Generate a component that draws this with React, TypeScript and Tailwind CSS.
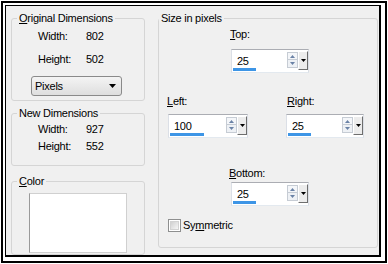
import React from 'react';

function Key({ children }: { children: React.ReactNode }) {
  return <u className="underline-offset-[1px]">{children}</u>;
}

function SpinBox({ value, bar, className }: { value: string; bar: number; className: string }) {
  return (
    <div className={`h-[24px] border border-[#abadb3] border-x-[#dbdfe6] border-b-[#e3e9ef] bg-white ${className}`}>
      <div className="relative flex h-full">
        <span className="flex-1 self-center pl-[5px]">{value}</span>
        {/* up / down arrows */}
        <div className="mt-[2px] flex h-[16px] w-[11px] flex-col">
          <div className="flex h-[8px] items-center justify-center border border-[#c6ccd4] bg-[#f4f6f9]">
            <svg width="5" height="3" viewBox="0 0 5 3">
              <path d="M2.5 0L5 3H0z" fill="#6a82a6" />
            </svg>
          </div>
          <div className="flex h-[8px] items-center justify-center border border-t-0 border-[#c6ccd4] bg-[#eef1f5]">
            <svg width="5" height="3" viewBox="0 0 5 3">
              <path d="M0 0h5L2.5 3z" fill="#6a82a6" />
            </svg>
          </div>
        </div>
        {/* small drop button */}
        <div className="mt-[1px] flex h-[19px] w-[10px] items-center justify-center border border-white border-r-[#6e6e6e] border-b-[#6e6e6e] bg-[#ececec]">
          <svg width="5" height="3" viewBox="0 0 5 3">
            <path d="M0 0h5L2.5 3z" fill="#000" />
          </svg>
        </div>
        <div className="absolute bottom-[1px] left-[1px] h-[3px] bg-[#3d95e6]" style={{ width: bar }} />
      </div>
    </div>
  );
}

export default function App() {
  return (
    <div className="h-[264px] w-[388px] bg-white p-[1px] font-['Liberation_Sans',Arial,sans-serif] text-[11px] leading-[13px] tracking-[-0.25px] text-black">
      <div className="h-full w-full border-2 border-black bg-white pt-[2px] pr-[4px] pb-[4px] pl-[2px]">
        <div className="flex h-full w-full items-start overflow-hidden border border-r-2 border-b-2 border-black bg-[#f0f0f0]">
          {/* left column */}
          <div className="mt-[6px] ml-[5px] flex w-[134px] flex-col">
            <fieldset className="h-[89px] rounded-[3px] border border-[#d5d5d5]">
              <legend className="ml-[5px] px-[2px]">
                <Key>O</Key>riginal Dimensions
              </legend>
              <div className="mt-[5px] flex pl-[26px]">
                <span className="w-[48px]">Width:</span>
                <span>802</span>
              </div>
              <div className="mt-[10px] flex pl-[26px]">
                <span className="w-[48px]">Height:</span>
                <span>502</span>
              </div>
              <div className="mt-[10px] ml-[19px] flex h-[20px] w-[91px] items-center justify-between rounded-[3px] border border-[#8a8a8a] bg-gradient-to-b from-[#f4f4f4] to-[#dedede] pr-[5px] pl-[3px]">
                <span>Pixels</span>
                <svg width="7" height="4" viewBox="0 0 7 4">
                  <path d="M0 0h7L3.5 4z" fill="#000" />
                </svg>
              </div>
            </fieldset>

            <fieldset className="mt-[6px] h-[59px] rounded-[3px] border border-[#d5d5d5]">
              <legend className="ml-[5px] px-[2px]">New Dimensions</legend>
              <div className="mt-[3px] flex pl-[26px]">
                <span className="w-[48px]">Width:</span>
                <span>927</span>
              </div>
              <div className="mt-[4px] flex pl-[26px]">
                <span className="w-[48px]">Height:</span>
                <span>552</span>
              </div>
            </fieldset>

            <fieldset className="mt-[9px] h-[80px] rounded-[3px] border border-[#d5d5d5]">
              <legend className="ml-[5px] px-[2px]">
                <Key>C</Key>olor
              </legend>
              <div className="mt-[5px] ml-[17px] h-[60px] w-[98px] border border-[#d0d0d0] border-l-[#9a9a9a] bg-white" />
            </fieldset>
          </div>

          {/* right column */}
          <fieldset className="mt-[6px] ml-[13px] h-[236px] w-[220px] rounded-[3px] border border-[#d5d5d5]">
            <legend className="px-[2px]">Size in pixels</legend>

            <div className="mt-[3px] ml-[71px]">
              <Key>T</Key>op:
            </div>
            <SpinBox value="25" bar={23} className="mt-[8px] ml-[72px] w-[78px]" />

            <div className="mt-[22px] ml-[8px] flex">
              <span className="w-[120px]">
                <Key>L</Key>eft:
              </span>
              <span>
                <Key>R</Key>ight:
              </span>
            </div>
            <div className="mt-[6px] ml-[9px] flex">
              <SpinBox value="100" bar={34} className="w-[80px]" />
              <SpinBox value="25" bar={23} className="ml-[38px] w-[78px]" />
            </div>

            <div className="mt-[29px] ml-[70px]">
              <Key>B</Key>ottom:
            </div>
            <SpinBox value="25" bar={23} className="mt-[2px] ml-[72px] w-[78px]" />

            <div className="mt-[13px] ml-[9px] flex items-center">
              <span className="flex h-[13px] w-[13px] items-center justify-center border border-[#8e8f8f] bg-white">
                <span className="h-[9px] w-[9px] border border-[#d2d2d2] bg-gradient-to-br from-[#d0d0d0] to-[#f6f6f6]" />
              </span>
              <span className="ml-[2px]">
                Sy<Key>m</Key>metric
              </span>
            </div>
          </fieldset>
        </div>
      </div>
    </div>
  );
}
